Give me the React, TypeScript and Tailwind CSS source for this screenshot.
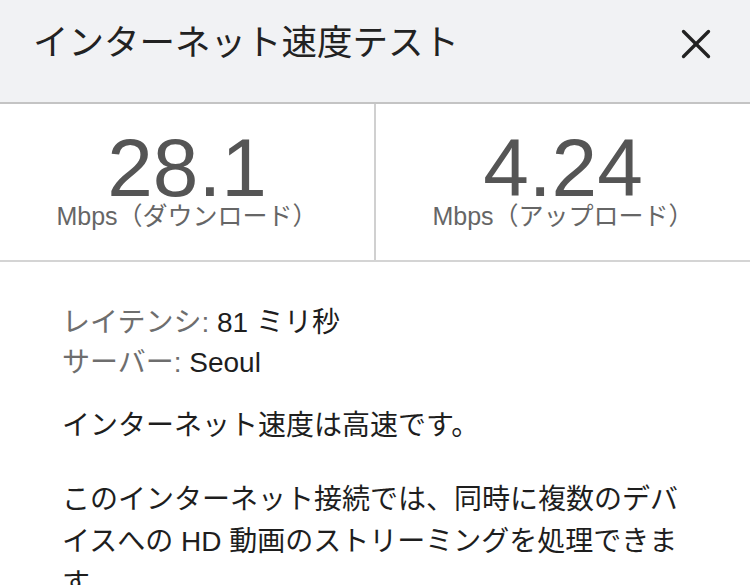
import { X } from 'lucide-react';

const font = { fontFamily: '"Liberation Sans", "Noto Sans CJK JP", sans-serif' };

function Stat({ value, label }: { value: string; label: string }) {
  return (
    <div className="flex flex-1 flex-col items-center pt-[29px]">
      <div className="text-[82px] leading-[70px] text-[#555555]">{value}</div>
      <div className="mt-[1px] text-[25px] leading-none text-[#666666]">{label}</div>
    </div>
  );
}

export default function App() {
  return (
    <div className="w-[750px] h-[585px] overflow-hidden bg-white" style={font}>
      <div className="flex h-[104px] items-center justify-between border-b-2 border-[#c4c4c4] bg-[#f1f2f4] pb-[14px] pl-[33px] pr-[29px]">
        <h1 className="text-[35.5px] font-normal leading-none text-[#222222]">インターネット速度テスト</h1>
        <X className="h-[50px] w-[50px] text-[#222222]" strokeWidth={1.6} />
      </div>

      <div className="flex h-[158px] border-b-2 border-[#d4d4d4]">
        <Stat value="28.1" label="Mbps（ダウンロード）" />
        <div className="w-[2px] bg-[#d0d0d0]" />
        <Stat value="4.24" label="Mbps（アップロード）" />
      </div>

      <div className="px-[62px] pt-[41px]">
        <div className="text-[28px] leading-[40px]">
          <div>
            <span className="text-[#6e6e6e]">レイテンシ: </span>
            <span className="text-[#1e1e1e]">81 ミリ秒</span>
          </div>
          <div>
            <span className="text-[#6e6e6e]">サーバー: </span>
            <span className="text-[#1e1e1e]">Seoul</span>
          </div>
        </div>
        <p className="mt-[22px] text-[28px] leading-[42px] text-[#1e1e1e]">インターネット速度は高速です。</p>
        <p className="mt-[32px] w-[620px] text-[28px] leading-[42px] text-[#1e1e1e]">
          このインターネット接続では、同時に複数のデバイスへの HD 動画のストリーミングを処理できます。
        </p>
      </div>
    </div>
  );
}
